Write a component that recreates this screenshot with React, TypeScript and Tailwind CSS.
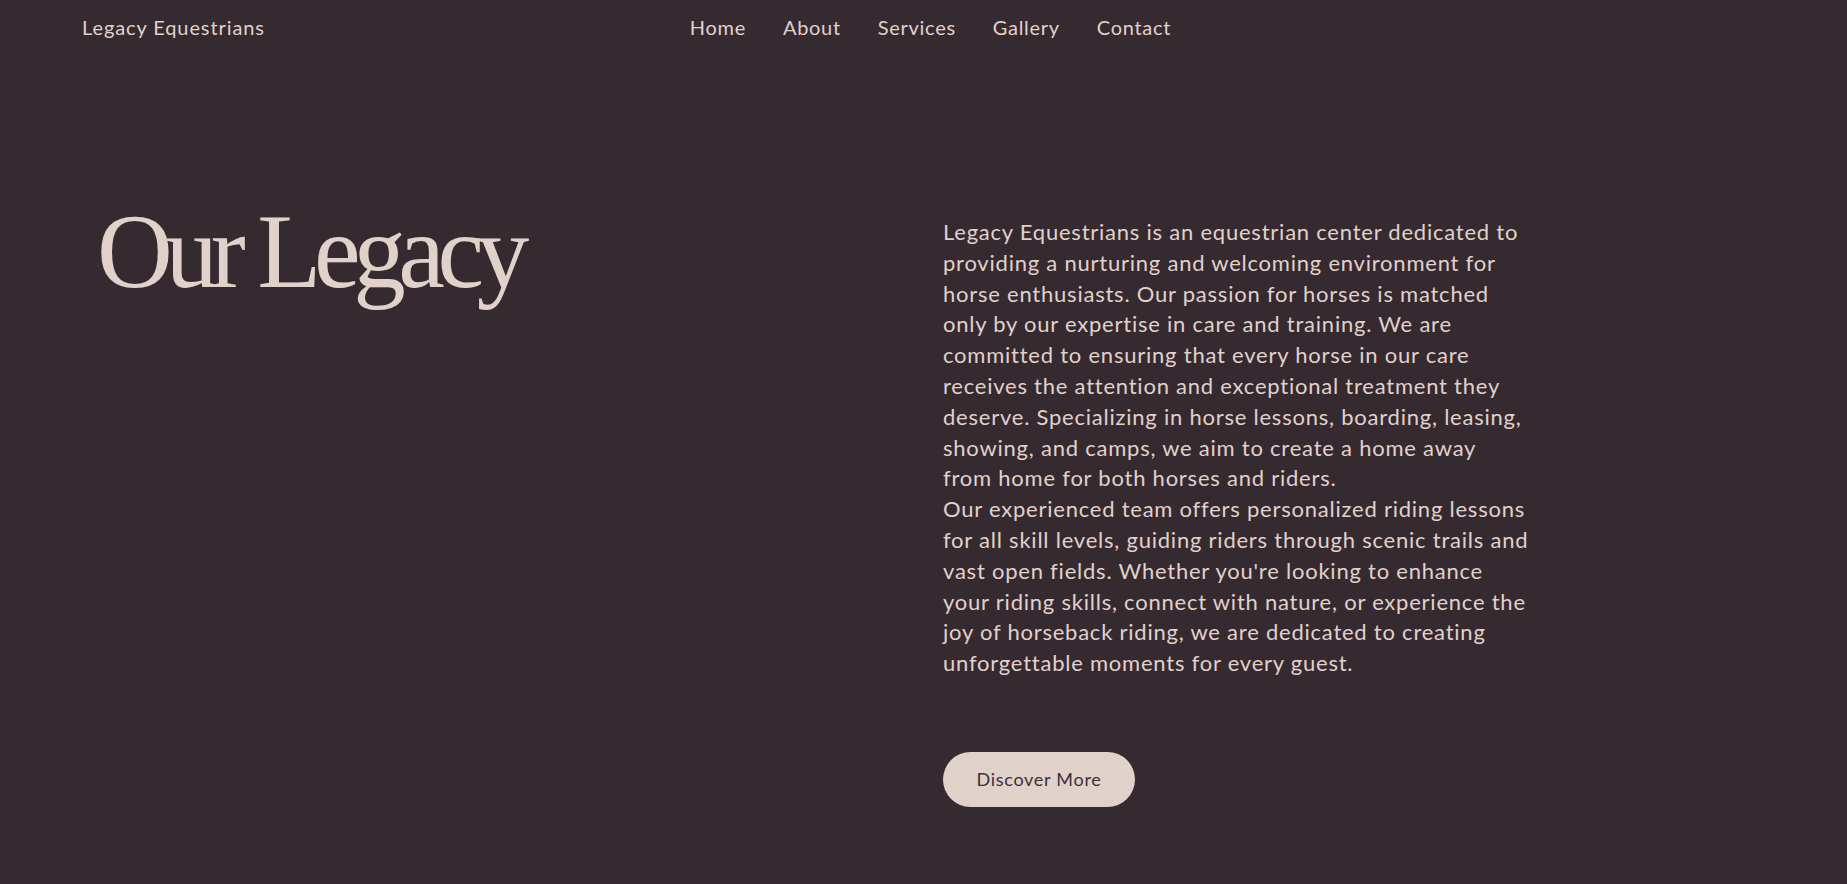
export default function App() {
  const navLinks = ["Home", "About", "Services", "Gallery", "Contact"];

  return (
    <div className="min-h-screen w-full bg-[#362a31] text-[#e0d1cb] font-['Lato',sans-serif]">
      {/* Header */}
      <header className="flex items-center h-[54px] pl-[82px]">
        <a className="text-[20px] leading-none tracking-[0.045em] whitespace-nowrap">Legacy Equestrians</a>
        <nav className="flex items-center gap-[37px] ml-[425px]">
          {navLinks.map((link) => (
            <a key={link} className="text-[20px] leading-none tracking-[0.035em] cursor-pointer">
              {link}
            </a>
          ))}
        </nav>
      </header>

      {/* About section */}
      <section className="flex pt-[145px]">
        <div className="w-[943px] shrink-0 pl-[97px]">
          <h1 className="font-['Liberation_Serif',serif] text-[105px] leading-none tracking-[-0.07em] text-[#e0d1cb]">
            Our Legacy
          </h1>
        </div>

        <div className="flex flex-col items-start pt-[18px]">
          <p className="text-[22px] leading-[1.4] tracking-[0.035em] whitespace-nowrap">
            Legacy Equestrians is an equestrian center dedicated to<br />
            providing a nurturing and welcoming environment for<br />
            horse enthusiasts. Our passion for horses is matched<br />
            only by our expertise in care and training. We are<br />
            committed to ensuring that every horse in our care<br />
            receives the attention and exceptional treatment they<br />
            deserve. Specializing in horse lessons, boarding, leasing,<br />
            showing, and camps, we aim to create a home away<br />
            from home for both horses and riders.<br />
            Our experienced team offers personalized riding lessons<br />
            for all skill levels, guiding riders through scenic trails and<br />
            vast open fields. Whether you're looking to enhance<br />
            your riding skills, connect with nature, or experience the<br />
            joy of horseback riding, we are dedicated to creating<br />
            unforgettable moments for every guest.
          </p>
          <button className="mt-[73px] h-[55px] w-[192px] rounded-full bg-[#e0d1cb] text-[#3d3039] text-[18px] tracking-[0.04em]">
            Discover More
          </button>
        </div>
      </section>
    </div>
  );
}
